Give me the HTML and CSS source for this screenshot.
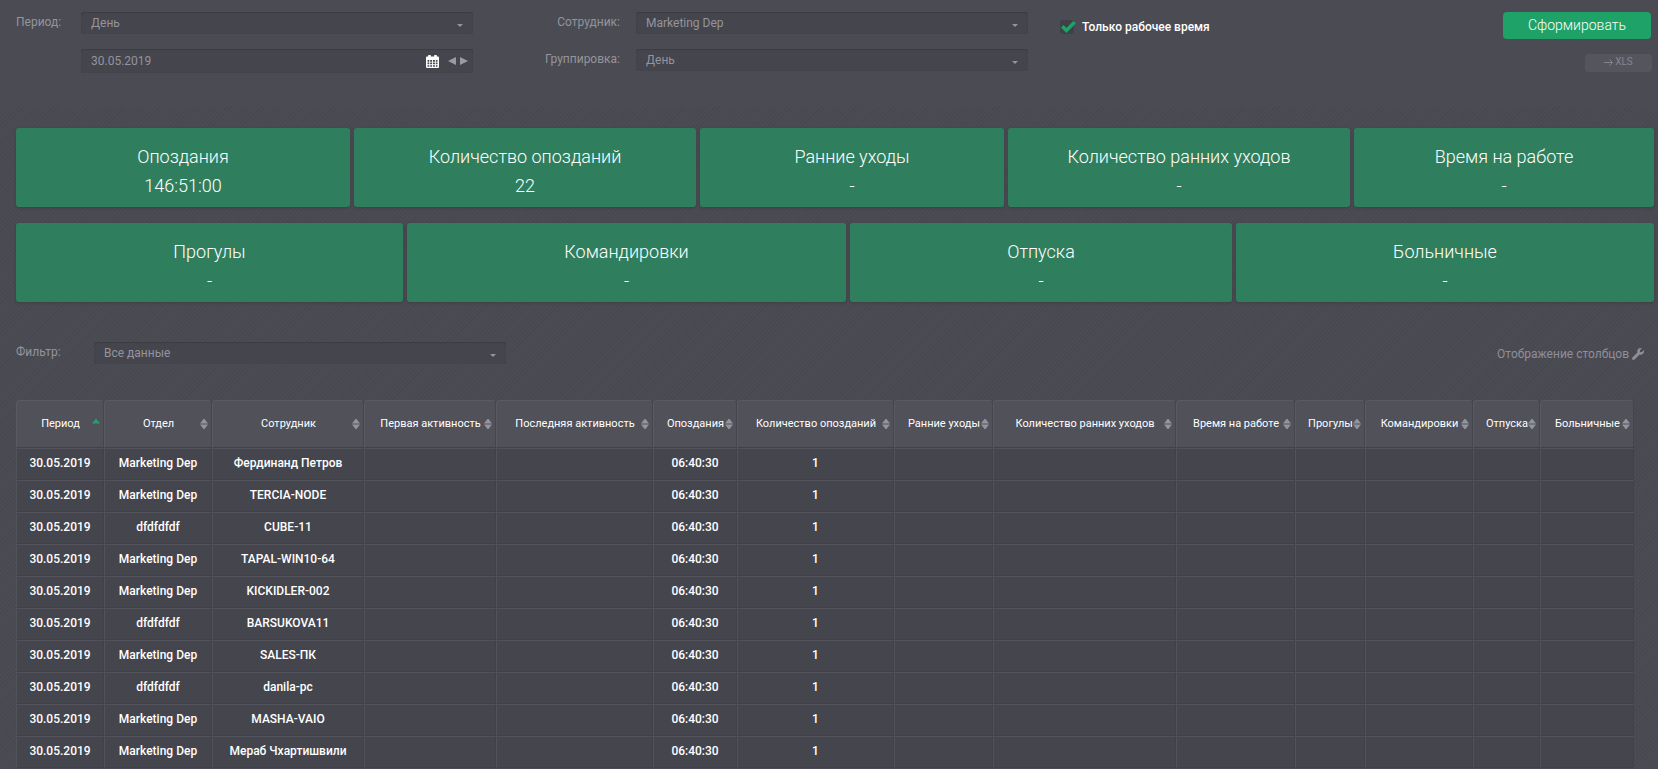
FILE: index.html
```html
<!DOCTYPE html>
<html lang="ru">
<head>
<meta charset="utf-8">
<title>Отчёт</title>
<link rel="stylesheet" href="styles.css">
</head>
<body>
<form class="params">
  <div class="param-grid">
    <label class="label" for="period">Период:</label>
    <span class="select"><select id="period"><option>День</option></select></span>
    <span></span>
    <div class="date">
      <input type="text" value="30.05.2019" aria-label="Дата">
      <button type="button" class="icon-btn" aria-label="Календарь">
        <svg width="13" height="13" viewBox="0 0 13 13"><path fill="#fff" fill-rule="evenodd" d="M1 1.5h1.2V.8a1 1 0 0 1 2.600 0v.7h3.400V.8a1 1 0 0 1 2.600 0v.7H12a1 1 0 0 1 1 1V12a1 1 0 0 1-1 1H1a1 1 0 0 1-1-1V2.500a1 1 0 0 1 1-1zM1.500 5v1.800h1.800V5zM4.200 5v1.800h1.900V5zM7 5v1.800h1.900V5zM9.800 5v1.800h1.700V5zM1.500 7.600v1.700h1.800V7.600zM4.200 7.600v1.700h1.900V7.600zM7 7.600v1.700h1.900V7.600zM9.800 7.600v1.700h1.700V7.600zM1.500 10.200v1.600h1.800v-1.600zM4.200 10.200v1.600h1.900v-1.600zM7 10.200v1.600h1.900v-1.600zM9.800 10.200v1.600h1.700v-1.600z"/></svg>
      </button>
      <span class="steps">
        <button type="button" class="icon-btn" aria-label="Назад"><svg width="8" height="8" viewBox="0 0 8 8"><path fill="#9a9aa2" d="M8 0v8L0 4z"/></svg></button>
        <button type="button" class="icon-btn" aria-label="Вперёд"><svg width="8" height="8" viewBox="0 0 8 8"><path fill="#9a9aa2" d="M0 0v8l8-4z"/></svg></button>
      </span>
    </div>
  </div>
  <div class="param-grid param-grid-wide">
    <label class="label" for="employee">Сотрудник:</label>
    <span class="select"><select id="employee"><option>Marketing Dep</option></select></span>
    <label class="label" for="group">Группировка:</label>
    <span class="select"><select id="group"><option>День</option></select></span>
  </div>
  <label class="check"><input type="checkbox" checked><span class="box"><svg width="15" height="12" viewBox="0 0 15 12"><path fill="#1fa268" d="M0 6.500 2.500 4 5.500 7 12.300 0 15 2.300 5.500 12z"/></svg></span>Только рабочее время</label>
  <div class="actions">
    <button type="button" class="submit">Сформировать</button>
    <button type="button" class="xls"><svg width="9" height="7" viewBox="0 0 9 7"><path fill="none" stroke="#85858d" d="M0 3.500h8M5.500 .5l3 3-3 3"/></svg>XLS</button>
  </div>
</form>

<main class="report">
  <section class="cards cards-five">
    <div class="card"><span>Опоздания</span><span>146:51:00</span></div>
    <div class="card"><span>Количество опозданий</span><span>22</span></div>
    <div class="card"><span>Ранние уходы</span><span>-</span></div>
    <div class="card"><span>Количество ранних уходов</span><span>-</span></div>
    <div class="card"><span>Время на работе</span><span>-</span></div>
  </section>
  <section class="cards cards-four">
    <div class="card"><span>Прогулы</span><span>-</span></div>
    <div class="card"><span>Командировки</span><span>-</span></div>
    <div class="card"><span>Отпуска</span><span>-</span></div>
    <div class="card"><span>Больничные</span><span>-</span></div>
  </section>

  <div class="filter">
    <label class="label" for="filter">Фильтр:</label>
    <span class="select"><select id="filter"><option>Все данные</option></select></span>
    <button type="button" class="columns-btn">Отображение столбцов
      <svg width="12" height="12" viewBox="0 0 512 512"><path fill="#8f8f99" d="M507.700 109.100c-2.200-9-13.500-12.100-20.100-5.500l-74.400 74.400-67.900-11.300L334 98.900l74.400-74.400c6.600-6.600 3.400-17.900-5.700-20.200-47.400-11.700-99.600.9-136.600 37.900-39.600 39.600-50.500 97.100-34.100 147.200L18.700 402.800c-25 25-25 65.500 0 90.500s65.500 25 90.500 0l213.200-213.200c50.100 16.700 107.500 5.700 147.400-34.200 37.100-37.100 49.700-89.300 37.900-136.800z"/></svg>
    </button>
  </div>

  <table class="grid">
    <colgroup>
      <col style="width:88px"><col style="width:108px"><col style="width:152px"><col style="width:132px"><col style="width:157px"><col style="width:84px"><col style="width:157px"><col style="width:99px"><col style="width:183px"><col style="width:119px"><col style="width:70px"><col style="width:108px"><col style="width:67px"><col style="width:94px">
    </colgroup>
    <thead><tr></tr></thead>
    <tbody></tbody>
  </table>
</main>
<script src="report.js"></script>
</body>
</html>
```
FILE: styles.css
```css
* { box-sizing: border-box; }
body {
  margin: 0;
  background: #4b4b53;
  color: #fff;
  font: 12px/16px Roboto, "Noto Sans", sans-serif;
}
button, input, select { font: inherit; color: inherit; }
button { border: 0; padding: 0; background: none; cursor: pointer; }
svg { display: block; flex: none; }

.params {
  display: flex;
  align-items: flex-start;
  height: 106px;
  padding: 12px 6px 0 16px;
}
.param-grid {
  display: grid;
  grid-template-columns: 65px minmax(0, 392px);
  row-gap: 15px;
  flex: 0 1 457px;
}
.param-grid-wide {
  grid-template-columns: 92px minmax(0, 392px);
  column-gap: 16px;
  flex-basis: 500px;
  margin-left: 55px;
}
.param-grid-wide .label { text-align: right; }
.label { color: #94949c; line-height: 20px; }

.select, .date {
  position: relative;
  background: #45454d;
  border-radius: 3px;
  box-shadow: inset 0 1px 1px #3c3c42, inset 0 0 1px #3f3f46;
  color: #94949c;
}
.select { display: block; height: 22px; }
.select::after {
  content: "";
  position: absolute;
  right: 10px;
  top: 12px;
  border: 3px solid transparent;
  border-top-color: #94949c;
  border-bottom: 0;
}
.select select {
  display: block;
  width: 100%;
  height: 22px;
  padding: 0 24px 0 10px;
  border: 0;
  background: none;
  appearance: none;
}
.date {
  display: flex;
  align-items: center;
  height: 24px;
  padding: 0 5px 0 10px;
}
.date input {
  flex: 1;
  min-width: 0;
  padding: 0;
  border: 0;
  background: none;
}
.steps { display: flex; gap: 4px; margin-left: 9px; }

.check {
  display: flex;
  align-items: center;
  height: 16px;
  margin: 7px 0 0 32px;
  font-weight: 500;
}
.check input { position: absolute; opacity: 0; }
.box {
  display: flex;
  align-items: center;
  width: 14px;
  height: 14px;
  margin-right: 8px;
  padding-left: 1px;
  border-radius: 3px;
  background: #404046;
}
.check input:not(:checked) + .box svg { visibility: hidden; }
.actions {
  display: flex;
  flex-direction: column;
  align-items: flex-end;
  gap: 15px;
  margin-left: auto;
}
.submit {
  width: 148px;
  height: 27px;
  margin-right: 1px;
  padding-bottom: 2px;
  border-radius: 4px;
  background: #1fa268;
  font-size: 14px;
  font-weight: 300;
}
.xls {
  display: flex;
  align-items: center;
  justify-content: center;
  gap: 2px;
  width: 67px;
  height: 18px;
  padding-bottom: 2px;
  border-radius: 4px;
  background: #55555e;
  color: #85858d;
  font-size: 10px;
}

.report {
  min-height: calc(100vh - 106px);
  padding: 22px 4px 0 16px;
  background: repeating-linear-gradient(135deg, #4c4c55 0 1px, #484850 2px 3px);
}
.cards { display: grid; gap: 4px; margin-bottom: 16px; }
.cards-five { grid-template-columns: 334fr 342fr 304fr 342fr 300fr; }
.cards-four { grid-template-columns: 387fr 439fr 382fr 418fr; }
.card {
  display: flex;
  flex-direction: column;
  align-items: center;
  gap: 5px;
  height: 79px;
  padding-top: 17px;
  border-radius: 3px;
  background: #2f7f5e;
  box-shadow: 0 1px 3px #3e3e44;
  font-size: 18px;
  font-weight: 300;
  line-height: 24px;
}

.filter {
  display: flex;
  margin: 40px 10px 34px 0;
}
.filter .label { width: 78px; }
.filter .select { width: 412px; }
.columns-btn {
  display: flex;
  align-items: center;
  gap: 3px;
  height: 24px;
  margin-left: auto;
  color: #8f8f99;
}

.grid {
  width: calc(100% - 20px);
  border-collapse: separate;
  border-spacing: 0;
  table-layout: fixed;
}
.grid th {
  height: 48px;
  padding: 0;
  border: 1px solid #5a5a63;
  border-right-color: #45454c;
  border-bottom-color: #414148;
  border-radius: 4px 4px 0 0;
  background: #51515a;
  font-size: 11px;
  font-weight: 400;
}
.th {
  display: flex;
  align-items: center;
  padding: 0 3px 0 4px;
}
.th span { flex: 1; text-align: center; white-space: nowrap; }
.th svg { margin-left: -8px; }
.grid td {
  height: 32px;
  padding: 0 0 2px;
  border: 1px solid #52525b;
  border-right-color: #414148;
  border-bottom-color: #414148;
  background: #45454d;
  font-weight: 500;
  text-align: center;
}
```
FILE: report.js
```js
const heads = ["Период", "Отдел", "Сотрудник", "Первая активность", "Последняя активность", "Опоздания", "Количество опозданий", "Ранние уходы", "Количество ранних уходов", "Время на работе", "Прогулы", "Командировки", "Отпуска", "Больничные"];
const people = [
  ["Marketing Dep", "Фердинанд Петров"],
  ["Marketing Dep", "TERCIA-NODE"],
  ["dfdfdfdf", "CUBE-11"],
  ["Marketing Dep", "TAPAL-WIN10-64"],
  ["Marketing Dep", "KICKIDLER-002"],
  ["dfdfdfdf", "BARSUKOVA11"],
  ["Marketing Dep", "SALES-ПК"],
  ["dfdfdfdf", "danila-pc"],
  ["Marketing Dep", "MASHA-VAIO"],
  ["Marketing Dep", "Мераб Чхартишвили"]
];
const both = '<svg width="8" height="10" viewBox="0 0 8 10"><path fill="#94949e" d="M0 4.500 3.500 0h1L8 4.500zM0 5.500h8L4.500 10h-1z"/></svg>';
const up = '<svg width="8" height="10" viewBox="0 0 8 10"><path fill="#1fa268" d="M0 4.500 3.500 0h1L8 4.500z"/></svg>';
document.querySelector(".grid thead tr").innerHTML = heads
  .map((h, i) => `<th scope="col"><div class="th"><span>${h}</span>${i ? both : up}</div></th>`).join("");
document.querySelector(".grid tbody").innerHTML = people
  .map(([dep, name]) => "<tr>" + ["30.05.2019", dep, name, "", "", "06:40:30", "1", "", "", "", "", "", "", ""]
    .map(c => `<td>${c}</td>`).join("") + "</tr>").join("");
```
